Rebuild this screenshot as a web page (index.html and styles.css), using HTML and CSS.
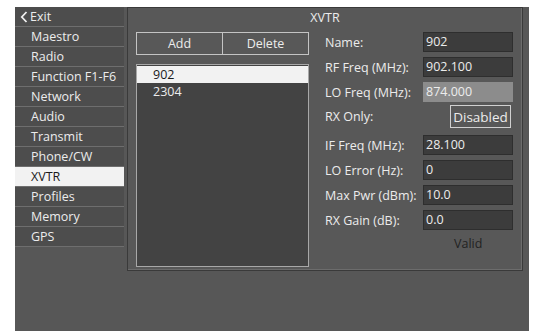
FILE: index.html
```html
<!DOCTYPE html>
<html lang="en">
<head>
    <meta charset="UTF-8">
    <title>XVTR Settings</title>
    <link rel="stylesheet" href="styles.css">
</head>
<body>
    <div class="app">
        <nav class="menu">
            <div class="menu-item exit">
                <svg class="chev" width="8" height="12" viewBox="0 0 8 12"><path d="M6.5 1 L1.8 6 L6.5 11" fill="none" stroke="#f0f0f0" stroke-width="1.8"/></svg>Exit
            </div>
            <div class="menu-item">Maestro</div>
            <div class="menu-item">Radio</div>
            <div class="menu-item">Function F1-F6</div>
            <div class="menu-item">Network</div>
            <div class="menu-item">Audio</div>
            <div class="menu-item">Transmit</div>
            <div class="menu-item">Phone/CW</div>
            <div class="menu-item active">XVTR</div>
            <div class="menu-item">Profiles</div>
            <div class="menu-item">Memory</div>
            <div class="menu-item">GPS</div>
        </nav>

        <section class="panel">
            <div class="panel-title">XVTR</div>
            <div class="panel-body">
                <div class="left">
                    <div class="btn-row">
                        <button class="btn">Add</button>
                        <button class="btn">Delete</button>
                    </div>
                    <div class="list">
                        <div class="list-item selected">902</div>
                        <div class="list-item">2304</div>
                    </div>
                </div>
                <div class="fields">
                    <div class="field"><span class="label">Name:</span><span class="input">902</span></div>
                    <div class="field"><span class="label">RF Freq (MHz):</span><span class="input">902.100</span></div>
                    <div class="field"><span class="label">LO Freq (MHz):</span><span class="input readonly">874.000</span></div>
                    <div class="field toggle-row"><span class="label">RX Only:</span><button class="toggle">Disabled</button></div>
                    <div class="field"><span class="label">IF Freq (MHz):</span><span class="input">28.100</span></div>
                    <div class="field"><span class="label">LO Error (Hz):</span><span class="input">0</span></div>
                    <div class="field"><span class="label">Max Pwr (dBm):</span><span class="input">10.0</span></div>
                    <div class="field"><span class="label">RX Gain (dB):</span><span class="input">0.0</span></div>
                    <div class="status">Valid</div>
                </div>
            </div>
        </section>
    </div>
</body>
</html>
```

FILE: styles.css
```css
body {
    margin: 0;
    background: #fff;
    font-family: 'Open Sans', 'Noto Sans', sans-serif;
    font-size: 12.5px;
    color: #ececec;
}

.app {
    margin: 7px 0 0 15px;
    width: 514px;
    height: 324px;
    background: #575757;
    display: flex;
    align-items: flex-start;
}

.menu {
    width: 109px;
    display: flex;
    flex-direction: column;
}

.menu-item {
    height: 19px;
    line-height: 19px;
    padding-left: 16px;
    background: #4d4d4d;
    border-bottom: 1px solid #6e6e6e;
    white-space: nowrap;
}

.menu-item.exit {
    padding-left: 5px;
    display: flex;
    align-items: center;
}

.chev {
    margin-right: 2px;
}

.menu-item.active {
    background: #f2f2f2;
    color: #1a1a1a;
}

.panel {
    margin-left: 3px;
    width: 394px;
    height: 262px;
    border: 1px solid #3a3a3a;
    box-shadow: inset -1px -1px 0 #6c6c6c;
    background: #585858;
    display: flex;
    flex-direction: column;
}

.panel-title {
    height: 24px;
    line-height: 20px;
    text-align: center;
}

.panel-body {
    flex: 1;
    display: flex;
    padding: 0 0 3px 8px;
}

.left {
    width: 173px;
    display: flex;
    flex-direction: column;
}

.btn-row {
    display: flex;
    height: 23px;
}

.btn {
    flex: 1;
    margin: 0;
    padding: 0;
    font: inherit;
    color: #ececec;
    background: #585858;
    border: 1px solid #c4c4c4;
}

.btn + .btn {
    border-left: none;
}

.list {
    flex: 1;
    margin-top: 9px;
    background: #434343;
    border: 1px solid #a8a8a8;
    padding-top: 1px;
}

.list-item {
    height: 17px;
    line-height: 17px;
    padding-left: 16px;
}

.list-item.selected {
    background: #f2f2f2;
    color: #1a1a1a;
}

.fields {
    margin-left: 16px;
    display: flex;
    flex-direction: column;
}

.field {
    display: flex;
    align-items: center;
    height: 20px;
    margin-bottom: 5px;
}

.label {
    width: 98px;
}

.input {
    width: 86px;
    height: 18px;
    line-height: 18px;
    padding-left: 2px;
    background: #3c3c3c;
    border: 1px solid #2e2e2e;
}

.input.readonly {
    background: #8c8c8c;
    border-color: #8c8c8c;
}

.toggle-row {
    height: 23px;
    margin-top: -2px;
    margin-bottom: 7px;
}

.toggle {
    margin-left: 27px;
    width: 61px;
    height: 23px;
    padding: 0;
    font: inherit;
    font-size: 13.5px;
    color: #ececec;
    background: #585858;
    border: 1px solid #d0d0d0;
}

.status {
    padding-left: 129px;
    color: #222;
}
```
